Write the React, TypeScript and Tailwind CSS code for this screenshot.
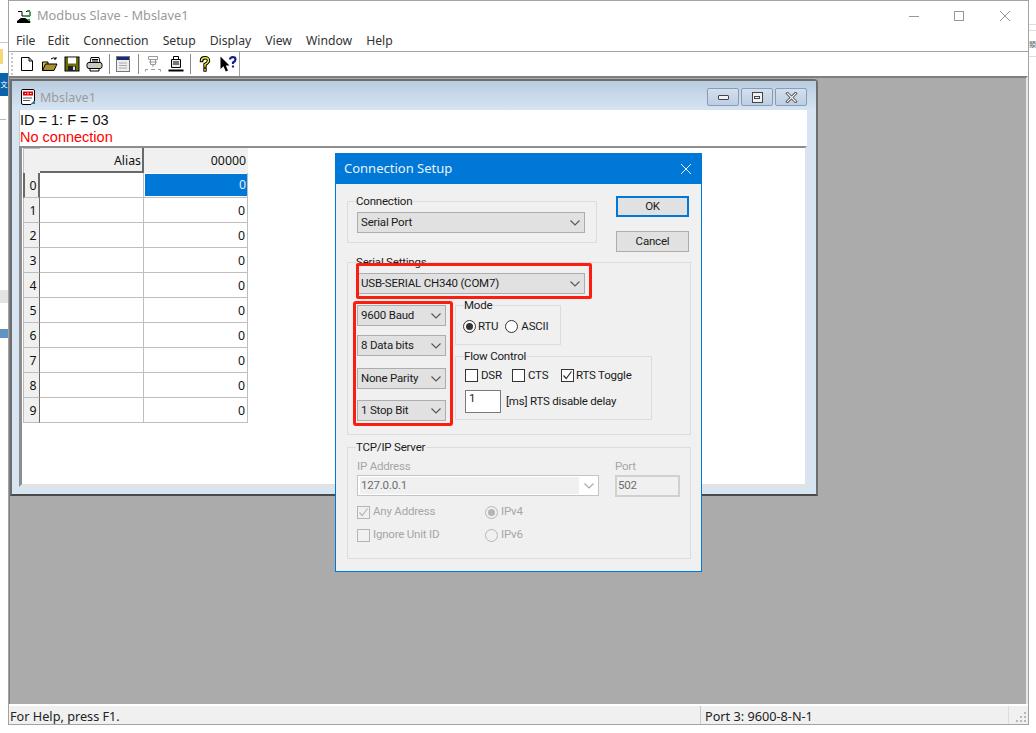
import type { ReactNode } from 'react'

const ui = { fontFamily: '"Noto Sans", "Open Sans", sans-serif' }
const dlg = { fontFamily: 'Roboto, "Liberation Sans", sans-serif' }

function Chevron({ color = '#555' }: { color?: string }) {
  return (
    <svg width="10" height="6" viewBox="0 0 10 6" fill="none" stroke={color} strokeWidth="1.1">
      <path d="M0.5 0.5 L5 5 L9.5 0.5" />
    </svg>
  )
}

function Combo({ label, width, mt = 0 }: { label: string; width: string; mt?: number }) {
  return (
    <div
      className={'flex h-[21px] items-center justify-between border border-[#adadad] bg-[#e1e1e1] pl-[3px] pr-[4px] text-[11.5px] leading-none text-[#1a1a1a] ' + width}
      style={{ marginTop: mt }}
    >
      <span>{label}</span>
      <Chevron />
    </div>
  )
}

function Group({ title, className, children }: { title: string; className: string; children: ReactNode }) {
  return (
    <div className={'relative border border-[#dcdcdc] ' + className}>
      <span className="absolute left-[8px] top-[-8px] bg-[#f0f0f0] pr-[1px] text-[11.5px] leading-[14px] text-[#1a1a1a]">{title}</span>
      {children}
    </div>
  )
}

function Check({ checked, disabled }: { checked?: boolean; disabled?: boolean }) {
  const c = disabled ? '#b5b5b5' : '#333'
  return (
    <span className={'flex h-[13px] w-[13px] shrink-0 items-center justify-center border ' + (disabled ? 'border-[#b5b5b5] bg-[#f0f0f0]' : 'border-[#333] bg-white')}>
      {checked && (
        <svg width="11" height="11" viewBox="0 0 11 11" fill="none" stroke={c} strokeWidth="1.2">
          <path d="M1.5 5.5 L4.2 8.5 L9.5 1.5" />
        </svg>
      )}
    </span>
  )
}

function Radio({ on, disabled }: { on?: boolean; disabled?: boolean }) {
  const c = disabled ? '#b5b5b5' : '#333'
  return (
    <svg width="13" height="13" viewBox="0 0 13 13" className="shrink-0">
      <circle cx="6.5" cy="6.5" r="6" fill={disabled ? '#f0f0f0' : '#fff'} stroke={c} />
      {on && <circle cx="6.5" cy="6.5" r="3.5" fill={disabled ? '#b5b5b5' : '#333'} />}
    </svg>
  )
}

function ToolSep() {
  return <div className="h-[20px] w-[1px] bg-[#8a8a8a]" />
}

function NewIcon() {
  return (
    <svg width="16" height="16" viewBox="0 0 16 16" fill="#fff" stroke="#000">
      <path d="M2.5 1.5 H10 L13.5 5 V14.5 H2.5 Z" />
      <path d="M10 1.5 V5 H13.5" fill="none" />
    </svg>
  )
}

function OpenIcon() {
  return (
    <svg width="16" height="16" viewBox="0 0 16 16" stroke="#000">
      <path d="M0.5 6 H6 V14.5 H0.5 Z" fill="#d8c04a" />
      <path d="M0.5 14.5 L3.5 8 H15 L12 14.5 Z" fill="#a8902c" />
      <path d="M9 3 Q12 0.5 14 3 M14 3 V1 M14 3 H12" fill="none" />
    </svg>
  )
}

function SaveIcon() {
  return (
    <svg width="16" height="16" viewBox="0 0 16 16">
      <rect x="1" y="1" width="14" height="14" fill="#6b6b10" stroke="#000" />
      <rect x="4" y="1.5" width="8" height="6" fill="#fff" />
      <rect x="4" y="10" width="8" height="5" fill="#222" />
      <rect x="9" y="10.5" width="2" height="3.5" fill="#ddd" />
    </svg>
  )
}

function PrintIcon() {
  return (
    <svg width="17" height="16" viewBox="0 0 17 16" stroke="#000">
      <path d="M5 1.5 H13 L14 7 H4 Z" fill="#fff" />
      <rect x="1" y="6.5" width="15" height="6" rx="2" fill="#c9c9c9" />
      <path d="M4 12.5 H13 V15 H4 Z" fill="#fff" />
      <rect x="10" y="8" width="3" height="1" fill="#e8d830" stroke="none" />
      <path d="M6 3.5 H12 M6 5 H12" />
    </svg>
  )
}

function WindowIcon() {
  return (
    <svg width="14" height="16" viewBox="0 0 14 16">
      <rect x="0.5" y="0.5" width="13" height="15" fill="#eee" stroke="#777" />
      <rect x="1" y="1" width="12" height="3" fill="#1a2a80" />
      <path d="M3 7 H11 M3 9.5 H11 M3 12 H11" stroke="#aaa" />
    </svg>
  )
}

function ConnectOffIcon() {
  return (
    <svg width="16" height="16" viewBox="0 0 16 16" fill="none" stroke="#9a9a9a">
      <path d="M3.5 0.5 H12.5 V3.5 H3.5 Z M5.5 3.5 V8.5 H10.5 V3.5 M4 6 H12 M8 8.5 V11" />
      <path d="M0.5 15.5 V13.5 H3 M6 13.5 H10 M13 13.5 H15.5 V15.5" />
    </svg>
  )
}

function ConnectIcon() {
  return (
    <svg width="16" height="16" viewBox="0 0 16 16" stroke="#000">
      <path d="M5.5 0.5 H10.5 V3.5 H5.5 Z" fill="#fff" />
      <path d="M3.5 3.5 H12.5 V11.5 H3.5 Z" fill="#eee" />
      <path d="M5 6 H11 M5 8 H11" />
      <path d="M0.5 14.5 H15.5" strokeWidth="2" />
    </svg>
  )
}

function HelpIcon() {
  return (
    <svg width="12" height="16" viewBox="0 0 12 16" fill="none" strokeLinecap="square">
      <path d="M2.5 4.5 Q2.5 1.8 6 1.8 Q9.5 1.8 9.5 4.5 Q9.5 6.5 6 8.5 V10" stroke="#000" strokeWidth="3.4" />
      <path d="M6 13.5 V14" stroke="#000" strokeWidth="3.4" />
      <path d="M2.5 4.5 Q2.5 1.8 6 1.8 Q9.5 1.8 9.5 4.5 Q9.5 6.5 6 8.5 V10" stroke="#f7ee2a" strokeWidth="1.4" />
      <path d="M6 13.5 V14" stroke="#f7ee2a" strokeWidth="1.4" />
    </svg>
  )
}

function WhatsThisIcon() {
  return (
    <svg width="17" height="16" viewBox="0 0 17 16" fill="none">
      <path d="M0.5 0.5 V13 L3.5 10.2 L5.8 15.5 L8 14.5 L5.8 9.5 H9.5 Z" fill="#000" />
      <path d="M10 3.5 Q10 1.2 12.8 1.2 Q15.5 1.2 15.5 3.5 Q15.5 5 13 6.5 V8" stroke="#14208a" strokeWidth="2.2" />
      <path d="M13 9.5 V11.5" stroke="#14208a" strokeWidth="2.2" />
    </svg>
  )
}

function AppIcon() {
  return (
    <svg width="14" height="14" viewBox="0 0 14 14" fill="none" stroke="#000">
      <path d="M1 2.5 H5 M9 2.5 H13 V7 H9 M5 2.5 V7 H9" />
      <path d="M0 12.5 L4 9.5 H8 L13 12.5 V13.5 H0 Z" fill="#000" />
      <rect x="10" y="1" width="3" height="2" fill="#19a34a" stroke="none" />
      <rect x="10" y="6" width="3" height="2" fill="#19a34a" stroke="none" />
      <rect x="11" y="10" width="2" height="2" fill="#19a34a" stroke="none" />
    </svg>
  )
}

function DocIcon() {
  return (
    <svg width="16" height="16" viewBox="0 0 16 16">
      <path d="M1.5 1.5 Q1.5 0.5 3 0.5 H13 Q14.5 0.5 14.5 2 V12 L11 15.5 H3 Q1.5 15.5 1.5 14 Z" fill="#fff" stroke="#000" />
      <rect x="3" y="2.5" width="10" height="4" fill="#e00000" />
      <path d="M5 4.5 H6 M8 3.5 V5.5 M10 4.5 H11.5" stroke="#fff" />
      <path d="M3 9 H12 M3 11.5 H10" stroke="#555" />
      <rect x="13" y="13" width="2" height="2" fill="#0a8a8a" />
    </svg>
  )
}

function MdiButton({ children }: { children: ReactNode }) {
  return (
    <div className="flex h-[18px] w-[32px] items-center justify-center rounded-[2px] border border-[#8b9bb6] bg-gradient-to-b from-[#d3e0ee] to-[#bccfe2]">
      {children}
    </div>
  )
}

function SizeGrip() {
  return (
    <svg width="12" height="12" viewBox="0 0 12 12" fill="#b8b8b8">
      <rect x="8" y="0" width="2" height="2" />
      <rect x="4" y="4" width="2" height="2" />
      <rect x="8" y="4" width="2" height="2" />
      <rect x="0" y="8" width="2" height="2" />
      <rect x="4" y="8" width="2" height="2" />
      <rect x="8" y="8" width="2" height="2" />
    </svg>
  )
}

const rows = ['0', '1', '2', '3', '4', '5', '6', '7', '8', '9']

function RegisterGrid() {
  return (
    <div className="ml-[1px] w-[225px] text-[12.3px] text-[#111]" style={ui}>
      <div className="flex h-[25px]">
        <div className="w-[17px] border-l border-t border-[#bdbdbd] bg-[#f0f0f0]" />
        <div className="flex w-[104px] items-center justify-end border-b-2 border-r-2 border-[#696969] bg-[#f0f0f0] pr-[1px] pt-[3px]">Alias</div>
        <div className="flex w-[104px] items-center justify-end bg-[#f0f0f0] pr-[2px] pt-[2px]">00000</div>
      </div>
      {rows.map((r, i) => (
        <div key={r} className="flex h-[25px]">
          <div className={'flex w-[17px] items-center justify-center border-b bg-[#f0f0f0] pl-[3px] pt-[3px] ' + (i === 0 ? 'border-l-2 border-r-2 border-[#696969] border-b-[#bdbdbd]' : 'border-l border-r border-[#bdbdbd] border-r-[#696969]')}>
            {r}
          </div>
          <div className="w-[104px] border-b border-r border-[#bdbdbd] bg-white" />
          {i === 0 ? (
            <div className="flex w-[104px] items-center justify-end border-b border-r border-[#bdbdbd] bg-white pb-[1px] pl-[1px]">
              <div className="flex h-[22px] w-full items-center justify-end bg-[#0078d7] pr-[1px] pt-[1px] text-[#e6f0fa]">0</div>
            </div>
          ) : (
            <div className="flex w-[104px] items-center justify-end border-b border-r border-[#bdbdbd] bg-white pr-[2px] pt-[3px]">0</div>
          )}
        </div>
      ))}
    </div>
  )
}

function ChildWindow() {
  return (
    <div className="absolute left-[0px] top-[1px] flex h-[417px] w-[808px] flex-col rounded-tr-[4px] border-2 border-[#6e6e6e] border-b-[#4a4a4a] bg-[#d7e4f2]">
      <div className="flex h-[29px] shrink-0 items-center bg-gradient-to-b from-[#b9cde0] to-[#d6e4f2] pl-[8px] pr-[9px] pt-[3px]">
        <DocIcon />
        <span className="ml-[4px] mt-[2px] text-[12.5px] text-[#9b9b9b]" style={ui}>Mbslave1</span>
        <div className="ml-auto flex gap-[2px]">
          <MdiButton>
            <div className="h-[5px] w-[11px] rounded-[1px] border border-[#444] bg-[#eef2f7]" />
          </MdiButton>
          <MdiButton>
            <div className="flex h-[11px] w-[11px] items-center justify-center border border-[#444] bg-[#eef2f7]">
              <div className="h-[3px] w-[6px] border border-[#444]" />
            </div>
          </MdiButton>
          <MdiButton>
            <svg width="13" height="11" viewBox="0 0 13 11" fill="none" strokeLinecap="square">
              <path d="M2.5 1.5 L10.5 9.5 M10.5 1.5 L2.5 9.5" stroke="#555" strokeWidth="3" />
              <path d="M2.5 1.5 L10.5 9.5 M10.5 1.5 L2.5 9.5" stroke="#f5f5f5" strokeWidth="1.2" />
            </svg>
          </MdiButton>
        </div>
      </div>
      <div className="mb-[7px] ml-[7px] mr-[9px] flex min-h-0 flex-1 flex-col bg-white">
        <div className="h-[36px] shrink-0 border-l border-[#c8c8c8] pt-[2px] text-[14.5px] leading-[17px]" style={{ fontFamily: '"Liberation Sans", sans-serif' }}>
          <div className="text-[#111]">ID = 1: F = 03</div>
          <div className="text-[#ff0000]">No connection</div>
        </div>
        <div className="min-h-0 flex-1 border-b-[3px] border-l-[3px] border-r-2 border-t-2 border-[#e2e2e2] border-l-[#8d8d8d] border-t-[#8d8d8d]">
          <RegisterGrid />
        </div>
      </div>
    </div>
  )
}

function ConnectionDialog() {
  return (
    <div className="absolute left-[325px] top-[75px] h-[419px] w-[367px] border border-[#0078d7] bg-[#f0f0f0] tracking-[-0.2px] text-[#1a1a1a]" style={dlg}>
      <div className="flex h-[30px] items-center justify-between bg-[#0078d7] pl-[8px] pr-[9px] text-[13px] tracking-normal text-[#e9f3fb]" style={ui}>
        <span>Connection Setup</span>
        <svg width="12" height="12" viewBox="0 0 12 12" stroke="#f0f7fd" fill="none">
          <path d="M1 1 L11 11 M11 1 L1 11" />
        </svg>
      </div>
      <div className="pl-[11px]">
        <div className="flex h-[59px]">
          <Group title="Connection" className="mt-[17px] h-[42px] w-[250px] pl-[9px] pt-[10px]">
            <Combo label="Serial Port" width="w-[228px]" />
          </Group>
          <div className="ml-[19px] mt-[12px] w-[73px] text-[11.5px]">
            <div className="flex h-[21px] items-center justify-center border-2 border-[#0078d7] bg-[#e1e1e1]">OK</div>
            <div className="mt-[14px] flex h-[21px] items-center justify-center border border-[#adadad] bg-[#e1e1e1]">Cancel</div>
          </div>
        </div>

        <Group title="Serial Settings" className="mt-[19px] h-[173px] w-[344px] pl-[9px] pt-[10px]">
          <Combo label="USB-SERIAL CH340 (COM7)" width="w-[228px]" />
          <div className="mt-[11px] flex">
            <div>
              <Combo label="9600 Baud" width="w-[89px]" />
              <Combo label="8 Data bits" width="w-[89px]" mt={9} />
              <Combo label="None Parity" width="w-[89px]" mt={12} />
              <Combo label="1 Stop Bit" width="w-[89px]" mt={11} />
            </div>
            <div className="ml-[9px]">
              <Group title="Mode" className="h-[40px] w-[106px] pl-[7px] pt-[14px]">
                <div className="flex items-center text-[11.5px] leading-none">
                  <Radio on />
                  <span className="ml-[2px]">RTU</span>
                  <span className="ml-[7px]"><Radio /></span>
                  <span className="ml-[3px]">ASCII</span>
                </div>
              </Group>
              <Group title="Flow Control" className="mt-[11px] h-[64px] w-[197px] pl-[9px] pt-[12px]">
                <div className="flex items-center text-[11.5px] leading-none">
                  <Check />
                  <span className="ml-[3px] w-[31px]">DSR</span>
                  <Check />
                  <span className="ml-[3px] w-[33px]">CTS</span>
                  <Check checked />
                  <span className="ml-[2px]">RTS Toggle</span>
                </div>
                <div className="mt-[8px] flex items-center text-[11.5px] leading-none">
                  <div className="h-[23px] w-[36px] border border-[#7a7a7a] bg-white pl-[3px] pt-[2px]">1</div>
                  <span className="ml-[5px]">[ms] RTS disable delay</span>
                </div>
              </Group>
            </div>
          </div>
        </Group>

        <Group title="TCP/IP Server" className="mt-[12px] h-[112px] w-[344px] pl-[9px] pt-[13px] text-[#a6a6a6]">
          <div className="flex text-[11.5px] leading-none">
            <div>
              <div className="h-[14px]">IP Address</div>
              <div className="flex h-[21px] w-[242px] items-center justify-between border border-[#c4c4c4] bg-white pl-[2px] pr-[4px] text-[#6d6d6d]">
                <div className="flex h-[17px] w-[219px] items-center bg-[#f0f0f0] pl-[1px]">127.0.0.1</div>
                <Chevron color="#a6a6a6" />
              </div>
            </div>
            <div className="ml-[16px]">
              <div className="h-[14px]">Port</div>
              <div className="flex h-[22px] w-[65px] items-center border-2 border-[#d0d0d0] pl-[1px] text-[#6d6d6d]">502</div>
            </div>
          </div>
          <div className="mt-[8px] flex h-[14px] items-center text-[11.5px] leading-none">
            <Check checked disabled />
            <span className="ml-[3px] w-[112px]">Any Address</span>
            <Radio on disabled />
            <span className="ml-[3px]">IPv4</span>
          </div>
          <div className="mt-[9px] flex h-[14px] items-center text-[11.5px] leading-none">
            <Check disabled />
            <span className="ml-[3px] w-[112px]">Ignore Unit ID</span>
            <Radio disabled />
            <span className="ml-[3px]">IPv6</span>
          </div>
        </Group>
      </div>
      {/* hand-drawn red marks on top of the dialog */}
      <div className="absolute left-[20px] top-[109px] h-[36px] w-[236px] rounded-[2px] border-[3px] border-[#fb1d10]" />
      <div className="absolute left-[17px] top-[147px] h-[125px] w-[100px] rounded-[3px] border-[3px] border-[#fb1d10]" />
    </div>
  )
}

export default function App() {
  return (
    <div className="relative flex h-[733px] w-[1036px] overflow-hidden bg-white">
      {/* bits of the windows behind */}
      <div className="w-[8px] shrink-0">
        <div className="mt-[42px] h-[1px] bg-[#ccc]" />
        <div className="mt-[6px] h-[15px] w-[3px] bg-[#f5d877]" />
        <div className="mt-[9px] flex h-[23px] items-center justify-center bg-[#0a62ad] text-[7px] text-white" style={{ fontFamily: '"Noto Sans CJK SC", sans-serif' }}>文</div>
        <div className="mt-[23px] h-[1px] w-[6px] bg-[#bbb]" />
        <div className="mt-[170px] h-[13px] bg-[#e4e4e4]" />
        <div className="mt-[26px] h-[9px] bg-[#5f93c4]" />
      </div>

      <div className="flex h-[725px] w-[1021px] shrink-0 flex-col border border-[#a3a3a3] bg-white" style={ui}>
        <div className="flex h-[29px] shrink-0 items-center pl-[8px] pt-[1px]">
          <AppIcon />
          <span className="ml-[6px] text-[12.8px] text-[#9a9a9a]">Modbus Slave - Mbslave1</span>
          <div className="ml-auto flex items-center">
            <div className="mr-[35px] h-[1px] w-[10px] bg-[#999]" />
            <div className="mr-[36px] h-[10px] w-[10px] border border-[#999]" />
            <svg width="10" height="10" viewBox="0 0 10 10" stroke="#999" className="mr-[18px]">
              <path d="M0 0 L10 10 M10 0 L0 10" />
            </svg>
          </div>
        </div>
        <div className="flex h-[21px] shrink-0 items-center gap-[14px] pl-[7px] pt-[2px] text-[12.2px] text-[#333]">
          <span>File</span>
          <span className="-ml-[2px]">Edit</span>
          <span>Connection</span>
          <span>Setup</span>
          <span>Display</span>
          <span>View</span>
          <span>Window</span>
          <span>Help</span>
        </div>
        <div className="h-[1px] shrink-0 bg-[#a3a3a3]" />
        <div className="flex h-[24px] w-[231px] shrink-0 items-center border-r border-[#a3a3a3]">
          <div className="ml-[1px] flex h-full w-[9px] flex-col justify-center gap-[2px]">
            {[0, 1, 2, 3, 4, 5].map((d) => (
              <div key={d} className="ml-[1px] h-[2px] w-[2px] bg-[#c8c8c8]" />
            ))}
          </div>
          <NewIcon />
          <div className="ml-[7px]"><OpenIcon /></div>
          <div className="ml-[6px]"><SaveIcon /></div>
          <div className="ml-[6px]"><PrintIcon /></div>
          <div className="ml-[6px]"><ToolSep /></div>
          <div className="ml-[6px]"><WindowIcon /></div>
          <div className="ml-[8px]"><ToolSep /></div>
          <div className="ml-[6px]"><ConnectOffIcon /></div>
          <div className="ml-[7px]"><ConnectIcon /></div>
          <div className="ml-[6px]"><ToolSep /></div>
          <div className="ml-[8px]"><HelpIcon /></div>
          <div className="ml-[9px]"><WhatsThisIcon /></div>
        </div>
        <div className="relative min-h-0 flex-1 border-l border-r-2 border-t-2 border-[#7f7f7f] border-r-[#e8e8e8] bg-[#ababab]">
          <ChildWindow />
          <ConnectionDialog />
        </div>
        <div className="flex h-[20px] shrink-0 items-center border-t-2 border-white bg-[#f0f0f0] pt-[3px] text-[12.7px] leading-none text-[#222]">
          <span className="ml-[1px] w-[690px]">For Help, press F1.</span>
          <div className="-mt-[3px] h-[18px] w-[1px] bg-[#c8c8c8]" />
          <span className="ml-[4px]">Port 3: 9600-8-N-1</span>
          <div className="-mt-[3px] ml-auto h-[18px] w-[1px] bg-[#dcdcdc]" />
          <div className="-mt-[3px] ml-[7px] mr-[0px] flex h-[18px] items-end">
            <SizeGrip />
          </div>
        </div>
      </div>

      <div className="flex-1 overflow-hidden text-[7px] leading-none text-[#666]">
        <div className="mt-[24px] h-[1px] bg-[#ddd]" />
        <div className="mt-[5px] h-[1px] bg-[#ddd]" />
        <div className="mt-[10px]" style={{ fontFamily: '"Noto Sans CJK SC", sans-serif' }}>類</div>
        <div className="mt-[8px] h-[1px] bg-[#ddd]" />
      </div>
    </div>
  )
}
